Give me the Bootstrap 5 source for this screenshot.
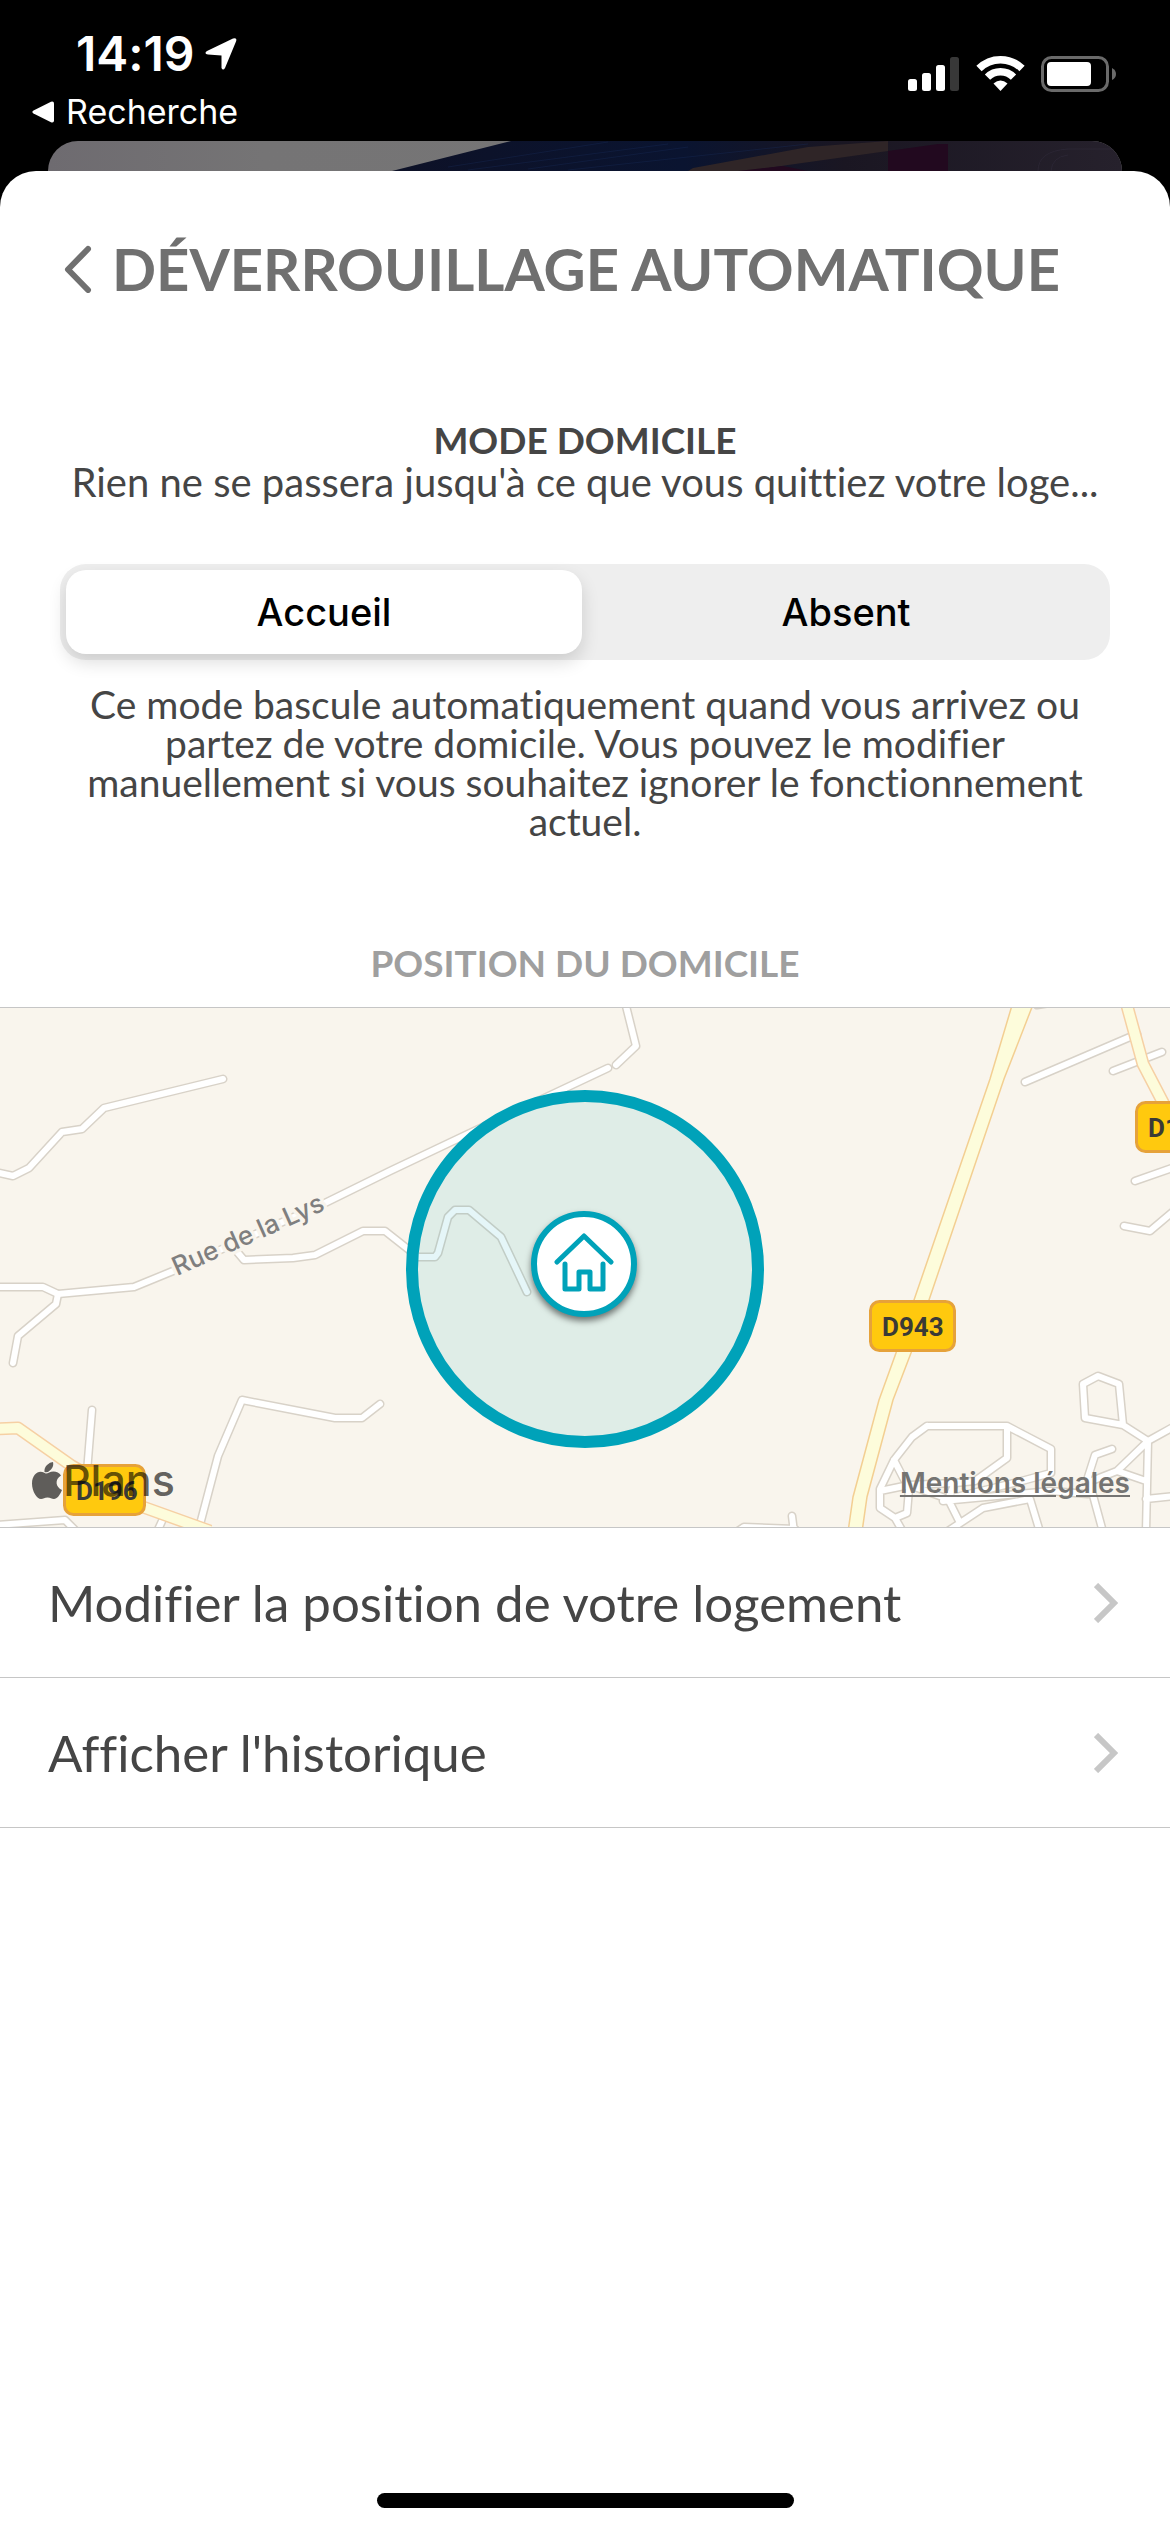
<!DOCTYPE html>
<html lang="fr">
<head>
<meta charset="utf-8">
<meta name="viewport" content="width=device-width, initial-scale=1">
<title>Déverrouillage automatique</title>
<link href="https://cdn.jsdelivr.net/npm/bootstrap@5.3.0/dist/css/bootstrap.min.css" rel="stylesheet">
<style>
  :root { --ink: #454545; --rule: #c6c6c6; }
  body { background: #000; color: var(--ink); font-family: Lato, "Open Sans", sans-serif; font-size: 39px; line-height: 44px; font-variant-ligatures: none; }
  .ui-sans { font-family: Inter, Roboto, sans-serif; }
  .status-bar { height: 141px; padding: 30px 53px 0 32px; }
  .clock { font-size: 48px; line-height: 48px; font-weight: 600; padding-left: 44px; gap: 10px; }
  .back-app { font-size: 34px; line-height: 40px; margin-top: 14px; gap: 12px; }
  .status-icons { padding-top: 25px; gap: 16px; }
  .under-card { height: 30px; margin: 0 48px; border-radius: 30px 30px 0 0; }
  .sheet { border-radius: 36px 36px 0 0; }
  .sheet-head { padding: 68px 60px 0 64px; gap: 20px; }
  .sheet-title { font-size: 58px; line-height: 60px; color: #707070; font-weight: 700; }
  .mode-block { padding: 121px 60px 0; }
  .mode-status { font-size: 40px; }
  .caps-label { font-size: 37px; line-height: 40px; font-weight: 700; }
  .segmented { background: #eee; border-radius: 26px; padding: 6px; margin-top: 60px; gap: 6px; }
  .segmented .btn { font-size: 38px; line-height: 48px; font-weight: 500; padding: 18px 0; border: 0; border-radius: 20px; color: #000; }
  .segmented .btn-check:checked + .btn { background: #fff; color: #000; box-shadow: 0 8px 18px rgba(0,0,0,.14); }
  .mode-help { line-height: 39px; padding: 25px 12px 0; }
  .place-label { color: #9f9f9f; margin-top: 102px; margin-bottom: 24px; }
  .map-box { background: #f9f5ed; border-top: 1px solid var(--rule); }
  .map-brand { left: 30px; bottom: 17px; font-size: 43px; line-height: 60px; font-weight: 500; color: rgba(0,0,0,.62); }
  .map-legal { right: 40px; bottom: 24px; font-size: 28px; line-height: 40px; font-weight: 600; color: #757472; }
  .map-legal:hover { color: #333; }
  .home-pin { filter: drop-shadow(0 4px 3px rgba(0,0,0,.5)); }
  .rows .list-group-item { height: 150px; padding: 0 52px 0 48px; color: var(--ink); font-size: 51px; line-height: 60px; border-color: var(--rule); border-width: 1px 0 0; }
  .rows .list-group-item:last-child { height: 151px; border-bottom-width: 1px; }
  .home-bar { width: 417px; height: 15px; margin-bottom: 24px; background: #000; }
</style>
</head>
<body class="d-flex flex-column min-vh-100">

<header class="status-bar ui-sans text-white d-flex justify-content-between align-items-start">
  <div>
    <div class="clock d-flex align-items-center">
      <span>14:19</span>
      <svg width="32" height="34" viewBox="0 0 32 34" fill="#fff" aria-hidden="true"><path d="M2 14 28 1.500Q32.500 0 31 4.500L20 31Q18 34 16.500 31V18.500L3 17.500Q-1.500 16.500 2 14Z"/></svg>
    </div>
    <a href="#" class="back-app d-flex align-items-center text-white text-decoration-none">
      <svg width="22" height="22" viewBox="0 0 22 22" fill="#fff" aria-hidden="true"><path d="M1.500 9.500 19 .8Q22 0 22 2.500V19.500Q22 22 19 21.200L1.500 12.500Q-.8 11 1.500 9.500Z"/></svg>
      <span>Recherche</span>
    </a>
  </div>
  <div class="status-icons d-flex align-items-center">
    <svg width="52" height="36" viewBox="0 0 52 36" fill="#fff" aria-hidden="true"><rect y="23" width="9" height="12" rx="2.500"/><rect x="14" y="17" width="9" height="18" rx="2.500"/><rect x="28" y="9" width="9" height="26" rx="2.500"/><rect x="42" y="1" width="9" height="34" rx="2.500" opacity=".22"/></svg>
    <svg width="49" height="37" viewBox="0 0 49 37" aria-hidden="true"><g fill="none" stroke="#fff" stroke-width="7.500"><path d="M3 13.500A30.500 30.500 0 0 1 46 13.500"/><path d="M11.500 22.200A18.500 18.500 0 0 1 37.500 22.200"/></g><path fill="#fff" d="M24.500 36 17.500 28.500Q24.500 22.500 31.500 28.500Z"/></svg>
    <svg width="76" height="36" viewBox="0 0 76 36" aria-hidden="true"><rect x="1.500" y="1.500" width="65" height="33" rx="9" fill="none" stroke="#6a6a6a" stroke-width="3"/><rect x="6" y="6" width="44" height="24" rx="4" fill="#fff"/><path d="M71 12Q75 14 75 18T71 24Z" fill="#6a6a6a"/></svg>
  </div>
</header>

<div class="under-card overflow-hidden" aria-hidden="true">
  <svg class="d-block w-100 h-100" viewBox="0 0 1074 30" preserveAspectRatio="none">
    <defs>
      <linearGradient id="wall"><stop offset="0" stop-color="#6e6b70"/><stop offset=".2" stop-color="#757475"/><stop offset="1" stop-color="#777"/></linearGradient>
      <linearGradient id="night" gradientUnits="userSpaceOnUse" x1="344" x2="1074" y1="0" y2="0"><stop offset="0" stop-color="#0d1127"/><stop offset=".4" stop-color="#0a1430"/><stop offset=".62" stop-color="#1a1622"/><stop offset="1" stop-color="#26212c"/></linearGradient>
    </defs>
    <rect width="1074" height="30" fill="url(#wall)"/>
    <path fill="url(#night)" d="M344 30 463 0H1074V30Z"/>
    <path fill="#2f2527" d="M645 27 760 6 840 0V10L740 24 700 30H640Z"/>
    <path fill="#22091f" d="M840 10 890 3H900V30H840ZM690 30 735 25 760 30Z"/>
    <g fill="none" stroke="#1b2d5c" stroke-opacity=".35"><path d="M400 26 560 1M420 29 620 3M480 28 640 6M520 29 760 3"/><path stroke="#3a3548" d="M990 30Q990 10 1020 8H1070M1003 30Q1004 16 1020 14"/></g>
  </svg>
</div>

<main class="sheet bg-white flex-grow-1 d-flex flex-column">
  <div class="sheet-head d-flex align-items-center">
    <a href="#" aria-label="Retour" class="d-flex"><svg width="28" height="48" viewBox="0 0 28 48" fill="none" stroke="#707070" stroke-width="6" stroke-linecap="round" stroke-linejoin="round"><path d="M24 4 4 24.500 24 45"/></svg></a>
    <h1 class="sheet-title mb-0 text-nowrap">DÉVERROUILLAGE AUTOMATIQUE</h1>
  </div>

  <section class="mode-block text-center">
    <h2 class="caps-label mb-0">MODE DOMICILE</h2>
    <p class="mode-status mb-0">Rien ne se passera jusqu'à ce que vous quittiez votre loge...</p>
    <div class="segmented ui-sans d-flex" role="group" aria-label="Mode domicile">
      <input type="radio" class="btn-check" name="mode" id="mode-home" checked>
      <label class="btn flex-fill w-50" for="mode-home">Accueil</label>
      <input type="radio" class="btn-check" name="mode" id="mode-away">
      <label class="btn flex-fill w-50" for="mode-away">Absent</label>
    </div>
    <p class="mode-help mb-0">Ce mode bascule automatiquement quand vous arrivez ou partez de votre domicile. Vous pouvez le modifier manuellement si vous souhaitez ignorer le fonctionnement actuel.</p>
  </section>

  <h2 class="caps-label place-label text-center">POSITION DU DOMICILE</h2>

  <div class="map-box position-relative">
    <svg class="d-block w-100" viewBox="0 1 1170 519" role="img" aria-label="Carte du domicile">
      <defs>
        <g id="streets" fill="none" stroke-linecap="round" stroke-linejoin="round">
          <path d="M-5 165 13 169 29 161 62 125 82 122 104 101 223 72"/>
          <path d="M-5 280H43L58 287 134 280 173 264 325 196 390 164 470 126 608 61"/>
          <path d="M58 287 56 297 18 329 13 356"/>
          <path d="M233 240 244 253 293 251 315 248 363 224H385L418 250H435L438 246 448 210 455 203H469L501 230 527 285"/>
          <path d="M625-5 636 39 616 58"/>
          <path d="M92 403 87 465M-5 518 65 513 78 526M162 514 157 525"/>
          <path d="M380 397 362 411H335L242 393 218 449 198 525"/>
          <path d="M735 526 744 520 795 522M792 509 794 525M1037-2 1050-4"/>
          <path d="M1025 75 1137 27M1113 64 1162 45M1135 174 1175 160M1124 219 1150 224 1175 203"/>
          <path d="M1123 418 1085 411 1083 377 1098 369 1119 377 1123 418 1148 434 1175 419M1148 434 1117 464 1094 473M1148 434 1146 525M1112 442 1095 448 1088 470 1103 525M1117 464 1146 474M1146 492 1175 489"/>
          <path d="M927 419H1007L1051 442V466L1018 475 948 492 909 478M927 419 912 430 894 453 880 482V501L895 511 903 525M895 511 907 506 909 482 894 453M880 484 909 478 955 476 948 492 960 516M1007 419V451L975 474 955 476M943 494 1050 484 1088 487M945 526 983 501 1030 492 1040 525"/>
        </g>
      </defs>
      <use href="#streets" stroke="#d8d2c8" stroke-width="9"/>
      <use href="#streets" stroke="#fff" stroke-width="6"/>
      <g fill="none" stroke-linejoin="round">
        <path stroke="#f6d0a4" stroke-width="13" d="M-5 422 18 421 72 459 143 500 210 524M1126-5 1143 57 1180 128"/>
        <path stroke="#fdfcdb" stroke-width="10" d="M-5 422 18 421 72 459 143 500 210 524M1126-5 1143 57 1180 128"/>
      </g>
      <path fill="#fdfcdb" stroke="#f3cf92" stroke-width="1.500" d="M1013-5 990 72 914 293 896 346 879 393 853 490 848 525H862L867 490 893 393 911 346 929 293 1004 72 1034-5Z"/>

      <g transform="translate(177 269) rotate(-24)" font-family="Inter, Roboto, sans-serif" font-size="26" font-weight="500">
        <text fill="#7f7f7f" stroke="#f9f5ed" stroke-width="7" stroke-linejoin="round" paint-order="stroke">Rue de la Lys</text>
      </g>

      <g fill="#ffc90e" stroke="#e6a23a" stroke-width="3">
        <rect x="870.500" y="294.500" width="84" height="49" rx="9"/>
        <rect x="1136.500" y="95.500" width="84" height="49" rx="9"/>
        <rect x="64.500" y="458.500" width="80" height="49" rx="9"/>
      </g>
      <g fill="#3a3a36" font-family="Roboto, 'Liberation Sans', sans-serif" font-weight="700" font-size="26">
        <text x="882" y="329">D943</text>
        <text x="1148" y="130">D1</text>
        <text x="76" y="493">D196</text>
      </g>

      <circle cx="585" cy="262" r="173" fill="#00a2b9" fill-opacity=".1" stroke="#00a2b9" stroke-width="12"/>
      <g>
        <circle class="home-pin" cx="584" cy="257" r="50" fill="#fff" stroke="#00a2b9" stroke-width="6"/>
        <path d="M557 255 584 229 611 255M565 257V282H579V265H590V282H603V257" fill="none" stroke="#00a2b9" stroke-width="5" stroke-linecap="round" stroke-linejoin="round"/>
      </g>
    </svg>
    <div class="map-brand ui-sans position-absolute d-flex align-items-center">
      <svg width="33" height="37" viewBox="0 0 33 37" fill="currentColor" aria-hidden="true"><path d="M23 0Q24 4 21 7.500T14.500 10Q14 6 17 3T23 0ZM16 11.500C18 11.500 20 9.500 23.500 9.500 26.500 9.500 29.500 11 31 13.500 24.500 17.500 25.500 25 32 28 30 33 27 37 24 37 21.500 37 20.500 35.500 17.500 35.500S13.500 37 11 37C7 37 2 29.500 2 21.500 2 14 6.500 9.800 10.500 9.800 13 9.800 15 11.500 16 11.500Z"/></svg>
      <span>Plans</span>
    </div>
    <a href="#" class="map-legal ui-sans position-absolute">Mentions légales</a>
  </div>

  <nav class="rows list-group list-group-flush">
    <a href="#" class="list-group-item d-flex align-items-center justify-content-between">
      <span>Modifier la position de votre logement</span>
      <svg width="24" height="40" viewBox="0 0 24 40" fill="none" stroke="#c7c7c7" stroke-width="6" aria-hidden="true"><path d="M2 2 20 20 2 38"/></svg>
    </a>
    <a href="#" class="list-group-item d-flex align-items-center justify-content-between">
      <span>Afficher l'historique</span>
      <svg width="24" height="40" viewBox="0 0 24 40" fill="none" stroke="#c7c7c7" stroke-width="6" aria-hidden="true"><path d="M2 2 20 20 2 38"/></svg>
    </a>
  </nav>

  <div class="home-bar rounded-pill mt-auto mx-auto"></div>
</main>

<script src="https://cdn.jsdelivr.net/npm/bootstrap@5.3.0/dist/js/bootstrap.bundle.min.js"></script>
</body>
</html>
